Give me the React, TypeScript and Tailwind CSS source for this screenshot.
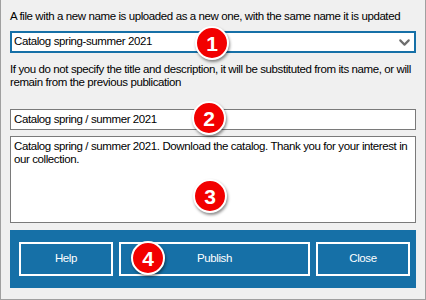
import { ChevronDown } from "lucide-react";

// Numbered callout badge
function Badge({ n, className }: { n: number; className: string }) {
  return (
    <div
      className={`absolute w-[34px] h-[34px] rounded-full bg-[#f20000] border-2 border-white shadow-[1px_2px_3px_rgba(0,0,0,0.45)] flex items-center justify-center text-white text-[21px] font-bold leading-none tracking-normal ${className}`}
      style={{ fontFamily: "'Liberation Sans', Arial, sans-serif" }}
    >
      {n}
    </div>
  );
}

function DialogButton({ label }: { label: string }) {
  return (
    <button className="h-[34px] border-2 border-white text-white flex items-center justify-center">
      {label}
    </button>
  );
}

export default function App() {
  return (
    <div
      className="relative w-[426px] h-[300px] bg-[#f0f0f0] border-x border-b border-[#a0a0a0] px-[9px] pt-[9px] text-[11.5px] tracking-[-0.4px] text-black whitespace-nowrap"
      style={{ fontFamily: "'Liberation Sans', Arial, sans-serif" }}
    >
      <div className="leading-[14px]">
        A file with a new name is uploaded as a new one, with the same name it is updated
      </div>

      {/* Combo box */}
      <div className="mt-[8px] h-[22px] bg-white border-2 border-[#1670a7] flex items-center justify-between pl-[2px] pr-[1px]">
        <span>Catalog spring-summer 2021</span>
        <ChevronDown size={17} strokeWidth={3} color="#6e6e6e" />
      </div>

      <div className="mt-[10px] leading-[13px]">
        If you do not specify the title and description, it will be substituted from its name, or will
        <br />
        remain from the previous publication
      </div>

      {/* Title */}
      <div className="mt-[20px] h-[21px] bg-white border border-[#7a7a7a] flex items-center px-[3px]">
        Catalog spring / summer 2021
      </div>

      {/* Description */}
      <div className="mt-[6px] h-[87px] bg-white border border-[#7a7a7a] px-[3px] pt-[3px] leading-[13px]">
        Catalog spring / summer 2021. Download the catalog. Thank you for your interest in
        <br />
        our collection.
      </div>

      {/* Button bar */}
      <div className="mt-[7px] h-[58px] bg-[#1670a7] grid grid-cols-[94px_191px_94px] gap-[6px] px-[9px] items-center">
        <DialogButton label="Help" />
        <DialogButton label="Publish" />
        <DialogButton label="Close" />
      </div>

      <Badge n={1} className="left-[194px] top-[26px]" />
      <Badge n={2} className="left-[191px] top-[101px]" />
      <Badge n={3} className="left-[192px] top-[179px]" />
      <Badge n={4} className="left-[130px] top-[241px]" />
    </div>
  );
}
